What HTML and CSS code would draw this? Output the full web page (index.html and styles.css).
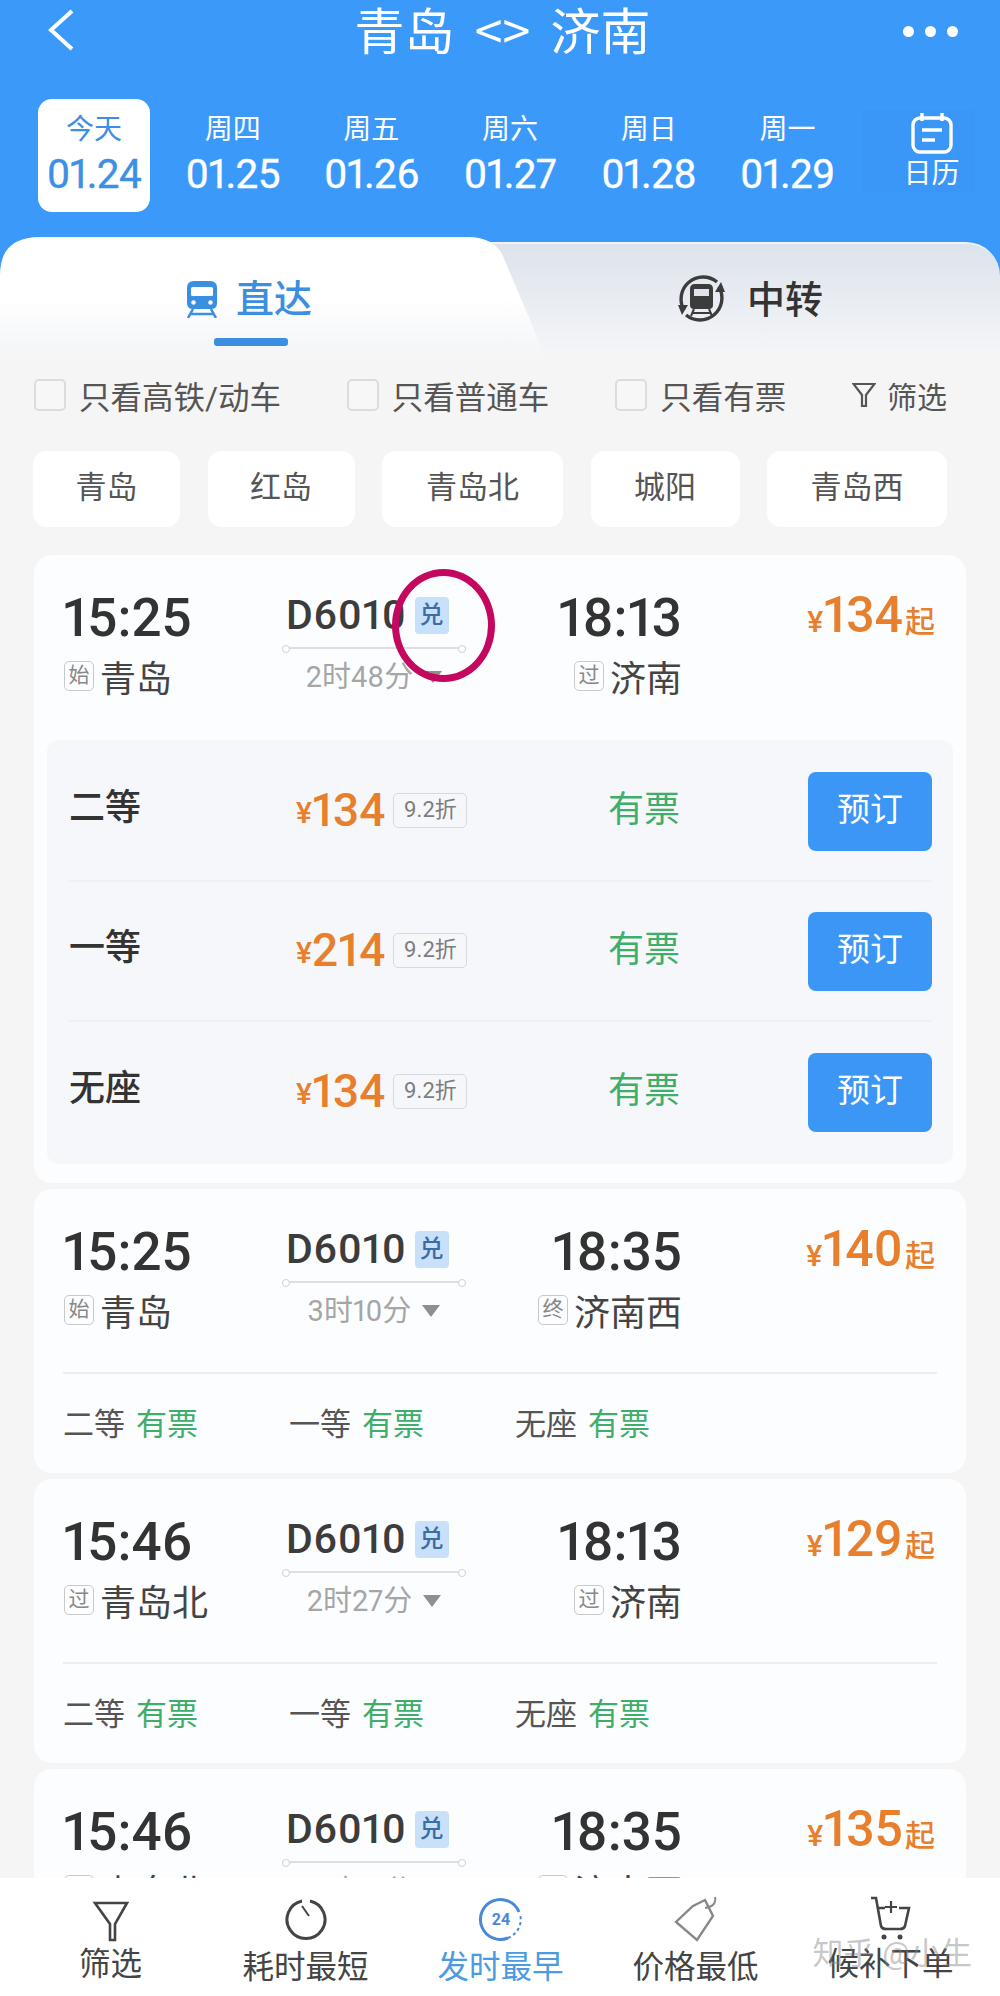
FILE: index.html
```html
<!DOCTYPE html>
<html lang="zh-CN">
<head>
	<meta charset="UTF-8">
	<title>青岛 &lt;&gt; 济南</title>
	<link rel="stylesheet" href="styles.css">
</head>
<body>
<div class="page">
	<header class="head">
		<div class="topbar">
			<svg class="back" width="28" height="42" viewBox="0 0 28 42"><path d="M25 2 L4 21 L25 40" fill="none" stroke="#fff" stroke-width="4"/></svg>
			<div class="title">青岛 &lt;&gt; 济南</div>
			<div class="dots"><i></i><i></i><i></i></div>
		</div>
		<div class="days">
			<div class="day on"><span>今天</span><b>01.24</b></div>
			<div class="day"><span>周四</span><b>01.25</b></div>
			<div class="day"><span>周五</span><b>01.26</b></div>
			<div class="day"><span>周六</span><b>01.27</b></div>
			<div class="day"><span>周日</span><b>01.28</b></div>
			<div class="day"><span>周一</span><b>01.29</b></div>
			<div class="cal">
				<svg width="42" height="42" viewBox="0 0 42 42"><g fill="none" stroke="#fff" stroke-width="3.4"><rect x="2" y="6" width="38" height="34" rx="7"/><path d="M11 1 V9 M31 1 V9 M11 18 H31 M11 28 H24"/></g></svg>
				<span>日历</span>
			</div>
		</div>
	</header>

	<div class="tabs">
		<div class="tab tab-l">
			<svg class="ic-train" width="32" height="37" viewBox="0 0 32 37"><path d="M8 0 H24 Q31 0 31 7 V22 Q31 28 25 28 H7 Q1 28 1 22 V7 Q1 0 8 0 Z" fill="#3a8fe0"/><rect x="5" y="6" width="22" height="9" rx="1.5" fill="#fff"/><circle cx="7.5" cy="21.5" r="2.2" fill="#fff"/><circle cx="24.5" cy="21.5" r="2.2" fill="#fff"/><path d="M7 28 L2 37 M25 28 L30 37 M5 33 H27" fill="none" stroke="#3a8fe0" stroke-width="2.5"/></svg>
			<span>直达</span>
			<i class="under"></i>
		</div>
		<div class="tab tab-r">
			<svg class="ic-swap" width="51" height="51" viewBox="0 0 51 51"><g fill="none" stroke="#3c3c3c" stroke-width="3.4"><path d="M8 37 A22 22 0 0 1 41 9"/><path d="M43 14 A22 22 0 0 1 10 42"/></g><path d="M2 32 L12 32 L6 42 Z M49 19 L39 19 L45 9 Z" fill="#3c3c3c"/><path d="M19 11 H32 Q37 11 37 16 V32 Q37 36 33 36 H18 Q14 36 14 32 V16 Q14 11 19 11 Z" fill="#3c3c3c"/><rect x="18" y="16" width="15" height="7" fill="#dfe4ec"/><path d="M18 36 L15 43 M33 36 L36 43 M17 40 H34" fill="none" stroke="#3c3c3c" stroke-width="2"/></svg>
			<span>中转</span>
		</div>
	</div>

	<div class="filters">
		<label class="chk"><i></i>只看高铁/动车</label>
		<label class="chk"><i></i>只看普通车</label>
		<label class="chk"><i></i>只看有票</label>
		<div class="chk sift">
			<svg width="24" height="26" viewBox="0 0 24 26"><path d="M1.5 2 H22.5 L14 13 V24 L10 24 V13 Z" fill="none" stroke="#555" stroke-width="2.2"/></svg>筛选
		</div>
	</div>

	<div class="stations">
		<div>青岛</div>
		<div>红岛</div>
		<div>青岛北</div>
		<div>城阳</div>
		<div>青岛西</div>
	</div>

	<div class="list">
		<div class="card open">
			<div class="main">
				<div class="col-from">
					<div class="time">15:25</div>
					<div class="st"><em>始</em>青岛</div>
				</div>
				<div class="col-mid">
					<div class="no">D6010<em>兑</em></div>
					<div class="line"></div>
					<div class="dur">2时48分<i></i></div>
				</div>
				<div class="col-to">
					<div class="time">18:13</div>
					<div class="st"><em>过</em>济南</div>
				</div>
				<div class="price"><small>¥</small>134<small>起</small></div>
			</div>
			<div class="panel">
				<div class="seat">
					<div class="s-name">二等</div>
					<div class="s-price"><small>¥</small>134<em>9.2折</em></div>
					<div class="s-left">有票</div>
					<div class="buy">预订</div>
				</div>
				<div class="seat">
					<div class="s-name">一等</div>
					<div class="s-price"><small>¥</small>214<em>9.2折</em></div>
					<div class="s-left">有票</div>
					<div class="buy">预订</div>
				</div>
				<div class="seat">
					<div class="s-name">无座</div>
					<div class="s-price"><small>¥</small>134<em>9.2折</em></div>
					<div class="s-left">有票</div>
					<div class="buy">预订</div>
				</div>
			</div>
			<div class="ring"></div>
		</div>

		<div class="card">
			<div class="main">
				<div class="col-from">
					<div class="time">15:25</div>
					<div class="st"><em>始</em>青岛</div>
				</div>
				<div class="col-mid">
					<div class="no">D6010<em>兑</em></div>
					<div class="line"></div>
					<div class="dur">3时10分<i></i></div>
				</div>
				<div class="col-to">
					<div class="time">18:35</div>
					<div class="st"><em>终</em>济南西</div>
				</div>
				<div class="price"><small>¥</small>140<small>起</small></div>
			</div>
			<div class="left">
				<div>二等<b>有票</b></div>
				<div>一等<b>有票</b></div>
				<div>无座<b>有票</b></div>
			</div>
		</div>

		<div class="card">
			<div class="main">
				<div class="col-from">
					<div class="time">15:46</div>
					<div class="st"><em>过</em>青岛北</div>
				</div>
				<div class="col-mid">
					<div class="no">D6010<em>兑</em></div>
					<div class="line"></div>
					<div class="dur">2时27分<i></i></div>
				</div>
				<div class="col-to">
					<div class="time">18:13</div>
					<div class="st"><em>过</em>济南</div>
				</div>
				<div class="price"><small>¥</small>129<small>起</small></div>
			</div>
			<div class="left">
				<div>二等<b>有票</b></div>
				<div>一等<b>有票</b></div>
				<div>无座<b>有票</b></div>
			</div>
		</div>

		<div class="card">
			<div class="main">
				<div class="col-from">
					<div class="time">15:46</div>
					<div class="st"><em>过</em>青岛北</div>
				</div>
				<div class="col-mid">
					<div class="no">D6010<em>兑</em></div>
					<div class="line"></div>
					<div class="dur">2时49分<i></i></div>
				</div>
				<div class="col-to">
					<div class="time">18:35</div>
					<div class="st"><em>终</em>济南西</div>
				</div>
				<div class="price"><small>¥</small>135<small>起</small></div>
			</div>
		</div>
	</div>

	<nav class="bar">
		<div class="item up">
			<svg width="46" height="46" viewBox="0 0 46 46"><path d="M7 7 H39 L27 28 V44 H22 V28 Z" fill="none" stroke="#444" stroke-width="2.6"/></svg>
			<span>筛选</span>
		</div>
		<div class="item">
			<svg width="46" height="46" viewBox="0 0 46 46"><path d="M19 5 A19 19 0 1 0 27 5" fill="none" stroke="#444" stroke-width="3"/><path d="M19 10 L26 20" stroke="#444" stroke-width="2"/></svg>
			<span>耗时最短</span>
		</div>
		<div class="item act">
			<svg width="46" height="46" viewBox="0 0 46 46"><path d="M41 16 A20 20 0 1 0 30 42" fill="none" stroke="#4a87d8" stroke-width="3"/><path d="M30 42 A20 20 0 0 0 42 18" fill="none" stroke="#4a87d8" stroke-width="2" stroke-dasharray="3 3"/><text x="23" y="29" text-anchor="middle" class="n24">24</text></svg>
			<span>发时最早</span>
		</div>
		<div class="item">
			<svg width="50" height="46" viewBox="0 0 50 46"><path d="M22 10 L34 4 L42 20 L26 44 L5 26 Z" fill="none" stroke="#888" stroke-width="2.4"/><path d="M34 12 Q46 10 44 1" fill="none" stroke="#888" stroke-width="2"/></svg>
			<span>价格最低</span>
		</div>
		<div class="item up">
			<svg width="44" height="46" viewBox="0 0 44 46"><path d="M2 2 H7 L12 30 Q13 33 17 33 H31 Q35 33 36 30 L40 12 H30 M10 12 H16" fill="none" stroke="#444" stroke-width="2.6"/><path d="M22 5 V17 M16 11 H28" stroke="#444" stroke-width="2.2"/><circle cx="15" cy="41" r="2.5" fill="#444"/><circle cx="31" cy="41" r="2.5" fill="#444"/></svg>
			<span>候补下单</span>
		</div>
		<div class="mark">知乎 @小生</div>
	</nav>
</div>
</body>
</html>
```
FILE: styles.css
```css
*{
	box-sizing: border-box;
}
body{
	margin: 0;
	font-family: Roboto, "Noto Sans CJK SC", sans-serif;
	font-variant-numeric: proportional-nums;
	color: #444;
}
em,i{
	font-style: normal;
}
.page{
	display: flex;
	flex-direction: column;
	width: 1000px;
	height: 1996px;
	overflow: hidden;
	background-color: #f5f5f6;
}

/* blue header */
.head{
	height: 237px;
	flex: none;
	background-color: #3b99fa;
	color: #fff;
}
.topbar{
	display: grid;
	grid-template-columns: 1fr auto 1fr;
	align-items: center;
	height: 62px;
	padding: 0 42px 0 47px;
}
.title{
	font-size: 50px;
	line-height: 58px;
	margin-top: -6px;
	word-spacing: 9px;
	font-family: "Noto Sans CJK SC", sans-serif;
}
.back{
	margin-top: -2px;
}
.dots{
	display: flex;
	justify-content: flex-end;
	gap: 11px;
}
.dots i{
	width: 11px;
	height: 11px;
	border-radius: 50%;
	background-color: #fff;
}
.days{
	display: flex;
	gap: 26.7px;
	margin-top: 37px;
	padding-left: 38px;
}
.day{
	display: flex;
	flex-direction: column;
	align-items: center;
	width: 112px;
	height: 113px;
	padding-top: 11px;
	border-radius: 14px;
}
.day span{
	font-size: 28px;
	line-height: 40px;
}
.day b{
	font-size: 40.5px;
	font-weight: 400;
	line-height: 48px;
	letter-spacing: -.6px;
	-webkit-text-stroke: .4px currentColor;
}
.day.on{
	background-color: #fff;
	color: #3b8fe4;
}
.cal{
	display: flex;
	flex-direction: column;
	align-items: center;
	width: 113px;
	height: 82px;
	margin: 11px 0 0 -8px;
	padding-left: 26px;
	background-color: #3a97f8;
}
.cal svg{
	flex: none;
	margin-top: 2px;
}
.cal span{
	font-size: 28px;
	line-height: 40px;
}

/* direct / transfer tabs */
.tabs{
	display: flex;
	flex: none;
	height: 121px;
	background-color: #3b99fa;
}
.tab{
	display: flex;
	align-items: center;
	height: 100%;
	font-size: 38px;
	font-weight: 500;
}
.tab-l{
	position: relative;
	z-index: 1;
	width: 546px;
	flex: none;
	padding: 0 0 4px 186px;
	gap: 18px;
	color: #3a8fe0;
	background: linear-gradient(#fff 50%, #f5f6f8 92%);
	clip-path: path("M0 121 L0 38 Q0 0 40 0 L468 0 Q497 0 505 24 L546 121 Z");
}
.ic-train{
	margin-top: 8px;
}
.under{
	position: absolute;
	left: 214px;
	top: 101px;
	width: 74px;
	height: 8px;
	border-radius: 3px;
	background-color: #3b8fe0;
}
.tab-r{
	flex: 1;
	margin: 5px 0 0 -100px;
	padding: 0 0 9px 230px;
	gap: 20px;
	height: 116px;
	color: #333;
	border-top: 2px solid #eef3fa;
	border-radius: 0 34px 0 0;
	background: linear-gradient(#dde3ec, #f5f6f8);
}
.ic-swap{
	margin-top: 4px;
}

/* filter rows */
.filters{
	display: flex;
	justify-content: space-between;
	flex: none;
	height: 40px;
	margin-top: 17px;
	padding: 0 53px 0 34px;
}
.chk{
	display: flex;
	align-items: center;
	gap: 13px;
	font-size: 31.5px;
	color: #555;
}
.chk i{
	width: 32px;
	height: 32px;
	border: 2px solid #dcdcdc;
	border-radius: 5px;
	background-color: #f7f7f7;
}
.sift{
	gap: 11px;
	font-size: 30px;
}
.stations{
	display: grid;
	grid-template-columns: 147px 147px 181px 149px 180px;
	justify-content: space-between;
	flex: none;
	margin: 36px 0 28px;
	padding: 0 53px 0 33px;
}
.stations div{
	height: 76px;
	font-size: 31px;
	line-height: 74px;
	text-align: center;
	color: #555;
	background-color: #fff;
	border-radius: 14px;
}

/* train cards */
.list{
	flex: 1;
	min-height: 0;
	overflow: hidden;
	padding: 0 34px;
}
.card{
	position: relative;
	margin-bottom: 6px;
	border-radius: 18px;
	background-color: #fcfdfe;
}
.card.open{
	padding-bottom: 19px;
}
.main{
	display: grid;
	grid-template-columns: 219px 184px 216px 1fr;
	height: 183px;
	padding: 33px 31px 0 29px;
}
.col-to{
	text-align: right;
}
.time{
	font-size: 53px;
	font-weight: 500;
	line-height: 60px;
	color: #333;
}
.st{
	display: flex;
	align-items: center;
	height: 56px;
	font-size: 36px;
	color: #444;
}
.col-to .st{
	justify-content: flex-end;
}
.st em{
	width: 30px;
	height: 30px;
	margin: 0 6px 0 1px;
	border: 1px solid #c9c9c9;
	border-radius: 5px;
	font-size: 21px;
	line-height: 27px;
	text-align: center;
	color: #888;
}
.col-mid{
	display: flex;
	flex-direction: column;
	align-items: center;
	margin-top: 3px;
}
.no{
	display: flex;
	align-items: center;
	width: 100%;
	padding-left: 4px;
	height: 48px;
	font-size: 41px;
	font-weight: 500;
	letter-spacing: .6px;
	color: #3c3c3c;
}
.no em{
	width: 34px;
	height: 37px;
	margin-left: 8px;
	border-radius: 4px;
	font-size: 24px;
	line-height: 36px;
	letter-spacing: 0;
	text-align: center;
	color: #3a6ea5;
	background-color: #c9e0fa;
}
.line{
	position: relative;
	width: 100%;
	height: 2px;
	margin-top: 8px;
	background-color: #dedfe2;
}
.line::before,.line::after{
	content: "";
	position: absolute;
	top: -2px;
	width: 6px;
	height: 6px;
	border: 1px solid #cfd0d3;
	border-radius: 50%;
	background-color: #fff;
}
.line::before{
	left: 0;
}
.line::after{
	right: 0;
}
.dur{
	display: flex;
	align-items: center;
	gap: 11px;
	margin-top: 7px;
	font-size: 29px;
	line-height: 42px;
	color: #a6a6a6;
}
.dur i{
	width: 0;
	height: 0;
	border-style: solid;
	border-width: 12px 9px 0;
	border-color: #8f8f8f transparent transparent;
}
.price{
	font-size: 50px;
	font-weight: 500;
	line-height: 50px;
	text-align: right;
	color: #e87f2d;
	margin-top: 2px;
}
.price small{
	font-size: 30px;
	margin-left: 2px;
}

/* expanded seats */
.panel{
	margin: 2px 13px 0;
	padding: 2px 0;
	background-color: #f6f7fa;
	border-radius: 12px;
}
.seat{
	display: grid;
	grid-template-columns: 227px 312px 200px 124px;
	align-items: center;
	height: 140px;
	margin: 0 22px;
	border-bottom: 2px solid #eef0f3;
}
.seat:last-child{
	border-bottom: 0;
}
.s-name{
	font-size: 36px;
	font-weight: 500;
	color: #333;
	margin-top: -15px;
}
.s-price{
	display: flex;
	align-items: center;
	font-size: 46px;
	font-weight: 500;
	color: #e87f2d;
	margin-top: -2px;
}
.s-price small{
	font-size: 30px;
	margin-top: 5px;
}
.s-price em{
	width: 74px;
	height: 35px;
	margin-left: 8px;
	border: 1.5px solid #d9dadd;
	border-radius: 5px;
	font-size: 22px;
	font-weight: 400;
	line-height: 32px;
	text-align: center;
	color: #7d7d7d;
}
.s-left{
	font-size: 36px;
	color: #3fae6a;
	margin-top: -11px;
}
.buy{
	height: 79px;
	border-radius: 8px;
	font-size: 33px;
	line-height: 76px;
	text-align: center;
	color: #fff;
	background-color: #3b96f6;
}
.ring{
	position: absolute;
	left: 358px;
	top: 14px;
	width: 103px;
	height: 113px;
	border: 7px solid #c4085f;
	border-radius: 50%;
}

/* collapsed seats */
.left{
	display: flex;
	gap: 91px;
	height: 101px;
	margin: 0 29px;
	border-top: 2px solid #edeef1;
	font-size: 31px;
	line-height: 102px;
	color: #555;
}
.left b{
	margin-left: 11px;
	font-weight: 400;
	color: #3fae6a;
}

/* bottom sort bar */
.bar{
	position: relative;
	display: grid;
	grid-template-columns: repeat(5, 195px);
	flex: none;
	height: 118px;
	padding: 18px 0 0 13px;
	background-color: #fff;
}
.item{
	display: flex;
	flex-direction: column;
	align-items: center;
	font-size: 31.5px;
	color: #444;
}
.item span{
	margin-top: 6px;
	line-height: 40px;
}
.item.up span{
	margin-top: 3px;
}
.item.act span{
	color: #4a9be0;
}
.n24{
	font-size: 16px;
	font-weight: 700;
	fill: #4a87d8;
}
.mark{
	position: absolute;
	right: 28px;
	top: 54px;
	font-size: 31px;
	line-height: 44px;
	color: rgba(130,130,130,.45);
}
```
